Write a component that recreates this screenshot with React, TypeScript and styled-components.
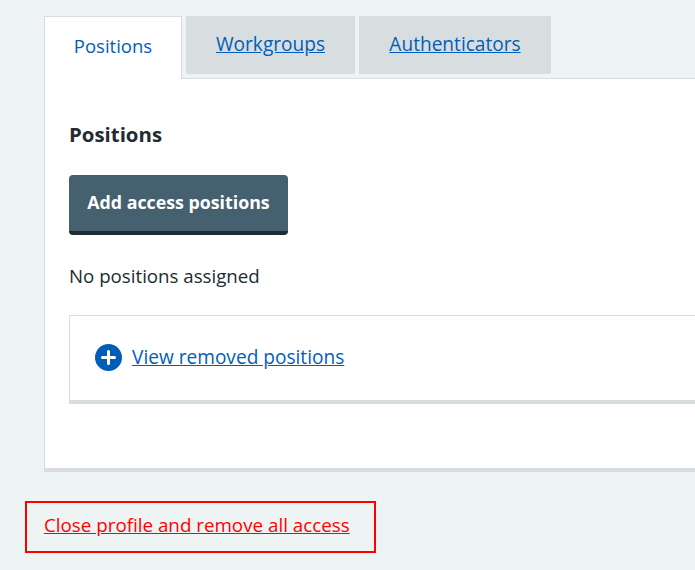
import React from "react";
import styled, { createGlobalStyle } from "styled-components";

const GlobalStyle = createGlobalStyle`
  html, body {
    margin: 0;
    padding: 0;
    background: #eef3f3;
    overflow: hidden;
  }
  body {
    font-family: "Open Sans", "Noto Sans", sans-serif;
    color: #212b32;
  }
`;

const Page = styled.div`
  width: 695px;
  height: 570px;
  overflow: hidden;
  box-sizing: border-box;
  padding-top: 16px;
`;

const TabsArea = styled.div`
  margin-left: 44px;
  width: 760px;
`;

const TabList = styled.div`
  display: flex;
  gap: 4px;
  align-items: flex-start;
  height: 62px;
`;

const ActiveTab = styled.div`
  box-sizing: border-box;
  width: 138px;
  height: 63px;
  padding-top: 17px;
  text-align: center;
  font-size: 18.5px;
  line-height: 24px;
  color: #005eb8;
  background: #fff;
  border: 1px solid #d8dde0;
  border-bottom: 0;
  position: relative;
  z-index: 1;
`;

const InactiveTab = styled.a<{ $width: number }>`
  box-sizing: border-box;
  width: ${(p) => p.$width}px;
  height: 58px;
  padding-top: 16px;
  text-align: center;
  font-size: 19.1px;
  line-height: 24px;
  color: #005eb8;
  background: #d8dde0;
  text-decoration: underline;
`;

const Panel = styled.div`
  box-sizing: border-box;
  height: 394px;
  padding: 40px 24px 0;
  background: #fff;
  border: 1px solid #d8dde0;
  border-bottom-width: 4px;
`;

const Heading = styled.h2`
  margin: 0;
  font-size: 20.4px;
  line-height: 30px;
  font-weight: 700;
`;

const PrimaryButton = styled.button`
  display: block;
  box-sizing: border-box;
  width: 219px;
  height: 60px;
  margin-top: 26px;
  padding: 0 0 2px;
  border: 0;
  border-bottom: 4px solid #212b32;
  border-radius: 4px;
  background: #456170;
  color: #fff;
  font-family: inherit;
  font-size: 17.8px;
  font-weight: 700;
`;

const Message = styled.p`
  margin: 28px 0 0;
  font-size: 18.7px;
  line-height: 26px;
`;

const Expander = styled.div`
  box-sizing: border-box;
  height: 89px;
  margin-top: 26px;
  padding: 0 25px 2px;
  display: flex;
  align-items: center;
  gap: 10px;
  background: #fff;
  border: 1px solid #d8dde0;
  border-bottom-width: 4px;
`;

const PlusIcon = styled.svg`
  flex: none;
  width: 27px;
  height: 27px;
`;

const ExpanderLink = styled.a`
  font-size: 19.1px;
  line-height: 26px;
  color: #005eb8;
  text-decoration: underline;
`;

const DangerBox = styled.div`
  box-sizing: border-box;
  width: 351px;
  height: 52px;
  margin: 29px 0 0 25px;
  padding: 0 0 4px 17px;
  display: flex;
  align-items: center;
  border: 2px solid #ff0000;
`;

const DangerLink = styled.a`
  font-size: 18.8px;
  line-height: 26px;
  color: #ff0000;
  text-decoration: underline;
  white-space: nowrap;
`;

export default function App() {
  return (
    <>
      <GlobalStyle />
      <Page>
        <TabsArea>
          <TabList>
            <ActiveTab>Positions</ActiveTab>
            <InactiveTab $width={169}>Workgroups</InactiveTab>
            <InactiveTab $width={192}>Authenticators</InactiveTab>
          </TabList>
          <Panel>
            <Heading>Positions</Heading>
            <PrimaryButton>Add access positions</PrimaryButton>
            <Message>No positions assigned</Message>
            <Expander>
              <PlusIcon viewBox="0 0 27 27">
                <circle cx="13.5" cy="13.5" r="13.5" fill="#005eb8" />
                <path d="M13.5 7.5v12M7.5 13.5h12" stroke="#fff" strokeWidth="3" strokeLinecap="round" />
              </PlusIcon>
              <ExpanderLink>View removed positions</ExpanderLink>
            </Expander>
          </Panel>
        </TabsArea>
        <DangerBox>
          <DangerLink>Close profile and remove all access</DangerLink>
        </DangerBox>
      </Page>
    </>
  );
}
